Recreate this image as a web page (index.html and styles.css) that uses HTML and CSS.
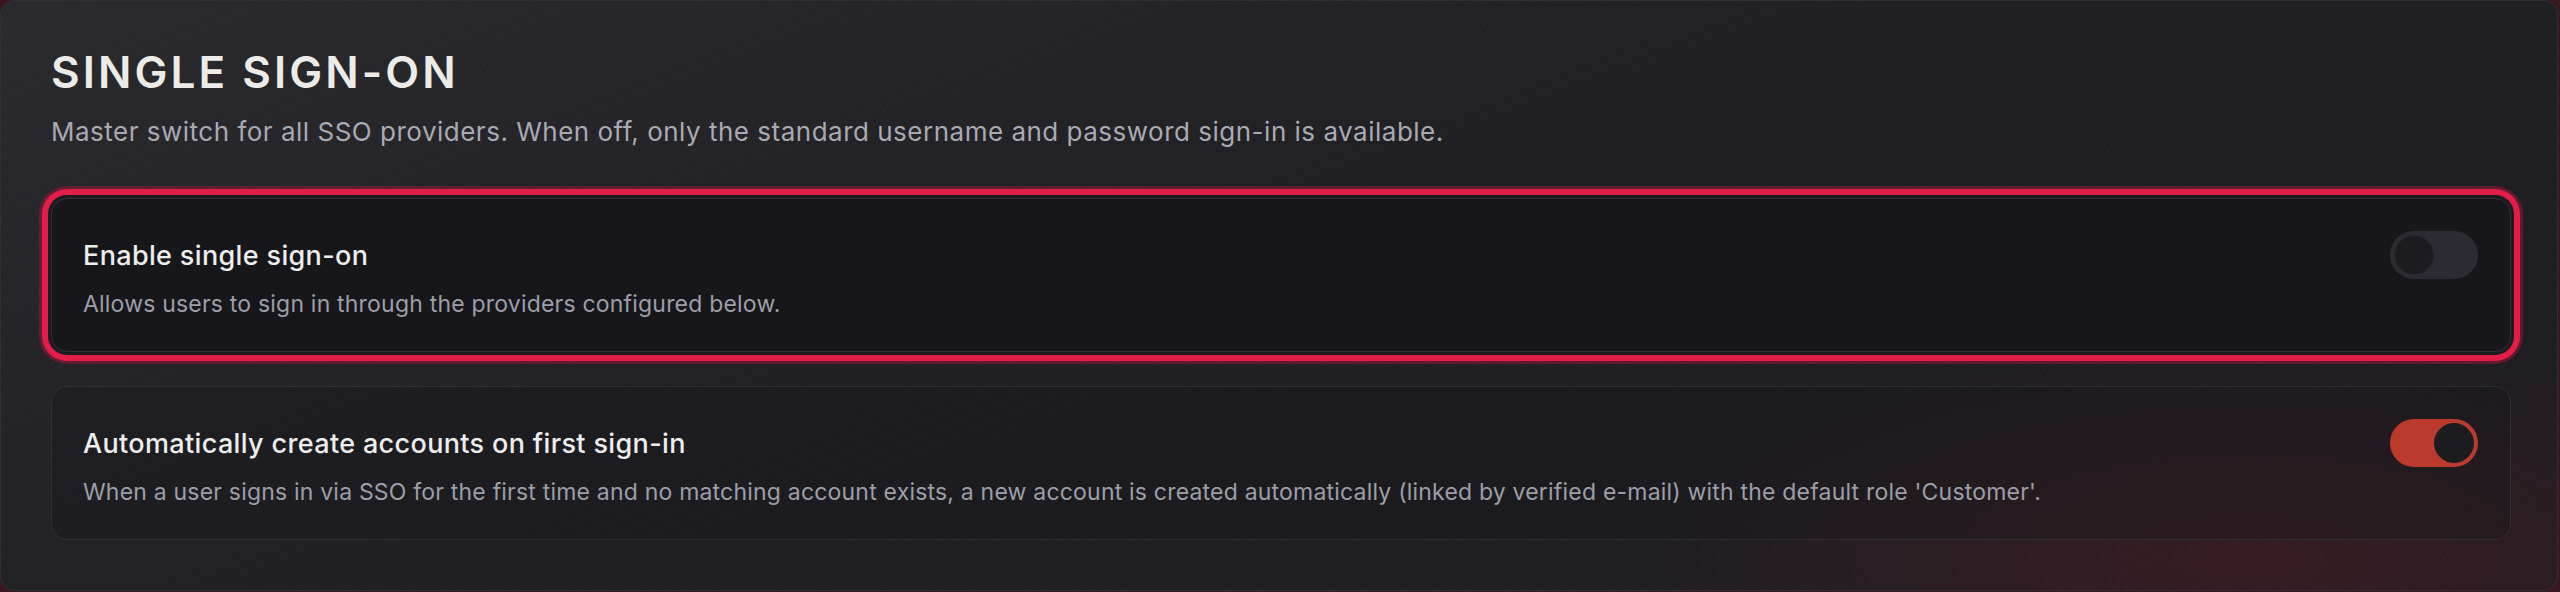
FILE: index.html
```html
<!DOCTYPE html>
<html lang="en">
<head>
<meta charset="utf-8">
<title>Single sign-on</title>
<link rel="stylesheet" href="styles.css">
</head>
<body>
<section class="panel">
  <h1 class="panel-title">SINGLE SIGN-ON</h1>
  <p class="panel-sub">Master switch for all SSO providers. When off, only the standard username and password sign-in is available.</p>
  <div class="settings">
    <div class="setting setting--focus">
      <div class="setting-head">
        <span class="setting-title">Enable single sign-on</span>
        <span class="switch" role="switch" aria-checked="false"><span class="knob"></span></span>
      </div>
      <p class="setting-desc">Allows users to sign in through the providers configured below.</p>
    </div>
    <div class="setting">
      <div class="setting-head">
        <span class="setting-title">Automatically create accounts on first sign-in</span>
        <span class="switch switch--on" role="switch" aria-checked="true"><span class="knob"></span></span>
      </div>
      <p class="setting-desc">When a user signs in via SSO for the first time and no matching account exists, a new account is created automatically (linked by verified e-mail) with the default role 'Customer'.</p>
    </div>
  </div>
</section>
</body>
</html>
```
FILE: styles.css
```css
* { box-sizing: border-box; }
html, body { margin: 0; padding: 0; }
body {
  background: #3a1620;
  font-family: Inter, "Noto Sans", sans-serif;
  width: 2560px;
  height: 592px;
  overflow: hidden;
}
.panel {
  width: 2558px;
  height: 591px;
  border: 1px solid #2f2f36;
  border-radius: 14px;
  padding: 45px 46px 0 50px;
  background:
    repeating-linear-gradient(120deg, rgba(255,255,255,0.02) 0 1px, rgba(255,255,255,0) 1px 9px),
    radial-gradient(ellipse 900px 320px at 2250px 560px, rgba(120,28,36,0.28), rgba(120,28,36,0) 70%),
    linear-gradient(160deg, #29292e 0%, #1f1f24 45%, #1c1c21 100%);
}
.panel-title {
  margin: 0;
  font-size: 44px;
  line-height: 53px;
  font-weight: 600;
  letter-spacing: 0.07em;
  color: #ecebe7;
}
.panel-sub {
  margin: 16px 0 0;
  font-size: 26px;
  line-height: 34px;
  letter-spacing: 0.5px;
  color: #a9a9b2;
}
.settings {
  display: flex;
  flex-direction: column;
  gap: 34px;
  margin-top: 49px;
}
.setting {
  border: 1px solid #2f2f37;
  border-radius: 16px;
  padding: 32px 32px 31px 31px;
  height: 154px;
  background: rgba(22,22,26,0.35);
}
.setting--focus {
  background: #17171b;
  box-shadow: 0 0 0 3px #1b1b1f, 0 0 0 9px #e11d48, 0 0 0 12px rgba(150,24,52,0.55);
}
.setting-head {
  display: flex;
  align-items: center;
  justify-content: space-between;
  height: 48px;
}
.setting-title {
  font-size: 27px;
  font-weight: 500;
  letter-spacing: 0.35px;
  color: #ededee;
}
.setting-desc {
  margin: 9px 0 0;
  font-size: 23px;
  line-height: 32px;
  letter-spacing: 0.2px;
  color: #9d9ea7;
}
.switch {
  position: relative;
  display: block;
  width: 88px;
  height: 48px;
  border-radius: 24px;
  background: #2b2b31;
  flex: none;
}
.knob {
  position: absolute;
  top: 4px;
  left: 4px;
  width: 40px;
  height: 40px;
  border-radius: 50%;
  background: #1c1c20;
  border: 1px solid #26262c;
}
.switch--on { background: #ba3a2d; }
.switch--on .knob { left: 44px; border-color: #1c1b20; }
```
